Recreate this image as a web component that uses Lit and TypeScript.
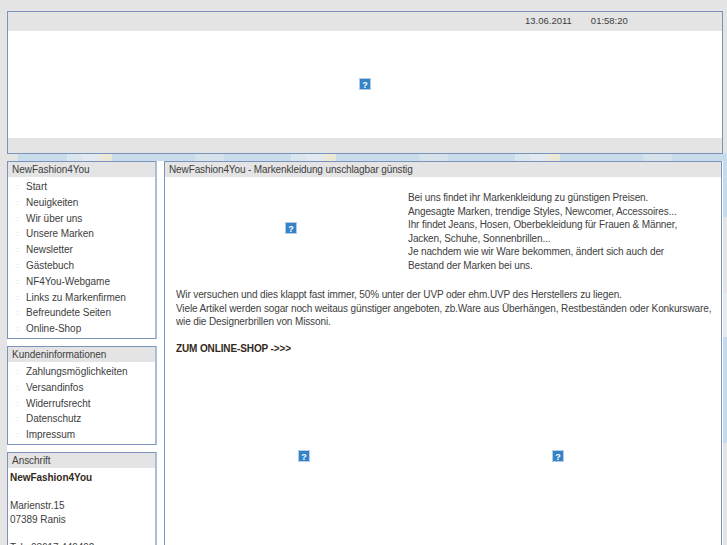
import { LitElement, html, css } from "lit";
import { customElement } from "lit/decorators.js";

const broken = html`<svg class="img" width="12" height="12" viewBox="0 0 12 12">
  <rect x="0" y="0" width="12" height="12" fill="#b5cdea"/>
  <rect x="1" y="1" width="10" height="10" fill="#3583c6"/>
  <text x="6" y="9.5" font-size="9" font-weight="700" text-anchor="middle" fill="#fff" font-family="Liberation Sans">?</text>
</svg>`;

const nav1 = ["Start","Neuigkeiten","Wir über uns","Unsere Marken","Newsletter","Gästebuch","NF4You-Webgame","Links zu Markenfirmen","Befreundete Seiten","Online-Shop"];
const nav2 = ["Zahlungsmöglichkeiten","Versandinfos","Widerrufsrecht","Datenschutz","Impressum"];

@customElement("app-root")
export class AppRoot extends LitElement {
  static styles = css`
    :host { display:block; width:727px; height:545px; overflow:hidden; font-family:"Liberation Sans",Arial,sans-serif; font-size:10px; color:#404040; letter-spacing:-0.12px;
      background-color:#e4e4e4;
      background-image:
        linear-gradient(#e4e4e4,#e4e4e4),
        linear-gradient(#c6daed 0 64px,#e4e4e4 64px 140px,#e6ebee 140px 184px,#c6daed 184px 290px,#e4e4e4 290px),
        linear-gradient(90deg,#c9dcec 0 67px,#d9e6ef 67px 82px,#e2eaf0 82px 100px,#ebe8d8 100px 112px,#c9dcec 112px 195px,#d6e2ec 195px 224px);
      background-repeat:no-repeat,no-repeat,repeat-x;
      background-size:18px 8px,4px 392px,224px 8px;
      background-position:0 153px,723px 153px,0 153px;
    }
    .page { padding:11px 4px 0 7px; display:flex; flex-direction:column; gap:7px; }
    .box { border:1px solid #7b93bb; background:#fff; box-sizing:border-box; }
    .top { height:143px; display:flex; flex-direction:column; }
    .strip { height:19px; background:#e4e4e4; display:flex; font-size:9.5px; letter-spacing:0; }
    .date { margin-left:517px; line-height:18px; }
    .time { margin-left:19px; line-height:18px; }
    .mid { flex:1; display:flex; align-items:center; justify-content:center; padding-bottom:1px; }
    .foot { height:15px; background:#e4e4e4; }
    .cols { display:flex; gap:7px; align-items:flex-start; background:#fff; height:400px; }
    .side { width:150px; display:flex; flex-direction:column; gap:7px; flex:none; }
    .side .box { border-right:2px solid #a9bcd8; }
    .head { height:15px; line-height:15px; background:#e4e4e4; padding-left:4px; letter-spacing:-0.04px; }
    ul { margin:0; padding:2px 0 1px; list-style:none; }
    li { height:15.8px; line-height:15.8px; display:flex; align-items:center; padding-left:7px; letter-spacing:-0.04px; }
    li i { width:11px; font-style:normal; color:#d8d8d8; font-size:8px; flex:none; }
    .addr { padding:3px 2px 0; line-height:14px; height:85px; overflow:hidden; letter-spacing:-0.04px; }
    .main { width:558px; flex:none; height:400px; overflow:hidden; }
    .main .head { letter-spacing:-0.12px; }
    .body { padding:0 11px; }
    .intro { display:flex; height:100px; }
    .pic { width:232px; flex:none; margin-left:-1px; padding-top:45px; padding-left:110px; box-sizing:border-box; }
    .itext { padding-top:14px; margin-left:1px; line-height:13.6px; white-space:nowrap; }
    p { margin:0; line-height:13.6px; white-space:nowrap; }
    .p1 { margin-top:11px; }
    .p2 { margin-top:13px; }
    b { color:#332a1c; }
    .pics { display:flex; margin-top:95px; padding-left:122px; gap:242px; }
  `;
  render() {
    return html`<div class="page">
      <div class="box top">
        <div class="strip"><span class="date">13.06.2011</span><span class="time">01:58:20</span></div>
        <div class="mid">${broken}</div>
        <div class="foot"></div>
      </div>
      <div class="cols">
        <div class="side">
          <div class="box"><div class="head">NewFashion4You</div><ul>${nav1.map(n=>html`<li><i>::</i><span>${n}</span></li>`)}</ul></div>
          <div class="box"><div class="head">Kundeninformationen</div><ul>${nav2.map(n=>html`<li><i>::</i><span>${n}</span></li>`)}</ul></div>
          <div class="box"><div class="head">Anschrift</div><div class="addr"><b>NewFashion4You</b><br><br>Marienstr.15<br>07389 Ranis<br><br>Tel.: 03617 449492</div></div>
        </div>
        <div class="box main">
          <div class="head">NewFashion4You - Markenkleidung unschlagbar günstig</div>
          <div class="body">
            <div class="intro">
              <div class="pic">${broken}</div>
              <div class="itext">Bei uns findet ihr Markenkleidung zu günstigen Preisen.<br>Angesagte Marken, trendige Styles, Newcomer, Accessoires...<br>Ihr findet Jeans, Hosen, Oberbekleidung für Frauen &amp; Männer,<br>Jacken, Schuhe, Sonnenbrillen...<br>Je nachdem wie wir Ware bekommen, ändert sich auch der<br>Bestand der Marken bei uns.</div>
            </div>
            <p class="p1">Wir versuchen und dies klappt fast immer, 50% unter der UVP oder ehm.UVP des Herstellers zu liegen.<br>Viele Artikel werden sogar noch weitaus günstiger angeboten, zb.Ware aus Überhängen, Restbeständen oder Konkursware,<br>wie die Designerbrillen von Missoni.</p>
            <p class="p2"><b>ZUM ONLINE-SHOP -&gt;&gt;&gt;</b></p>
            <div class="pics">${broken}${broken}</div>
          </div>
        </div>
      </div>
    </div>`;
  }
}
